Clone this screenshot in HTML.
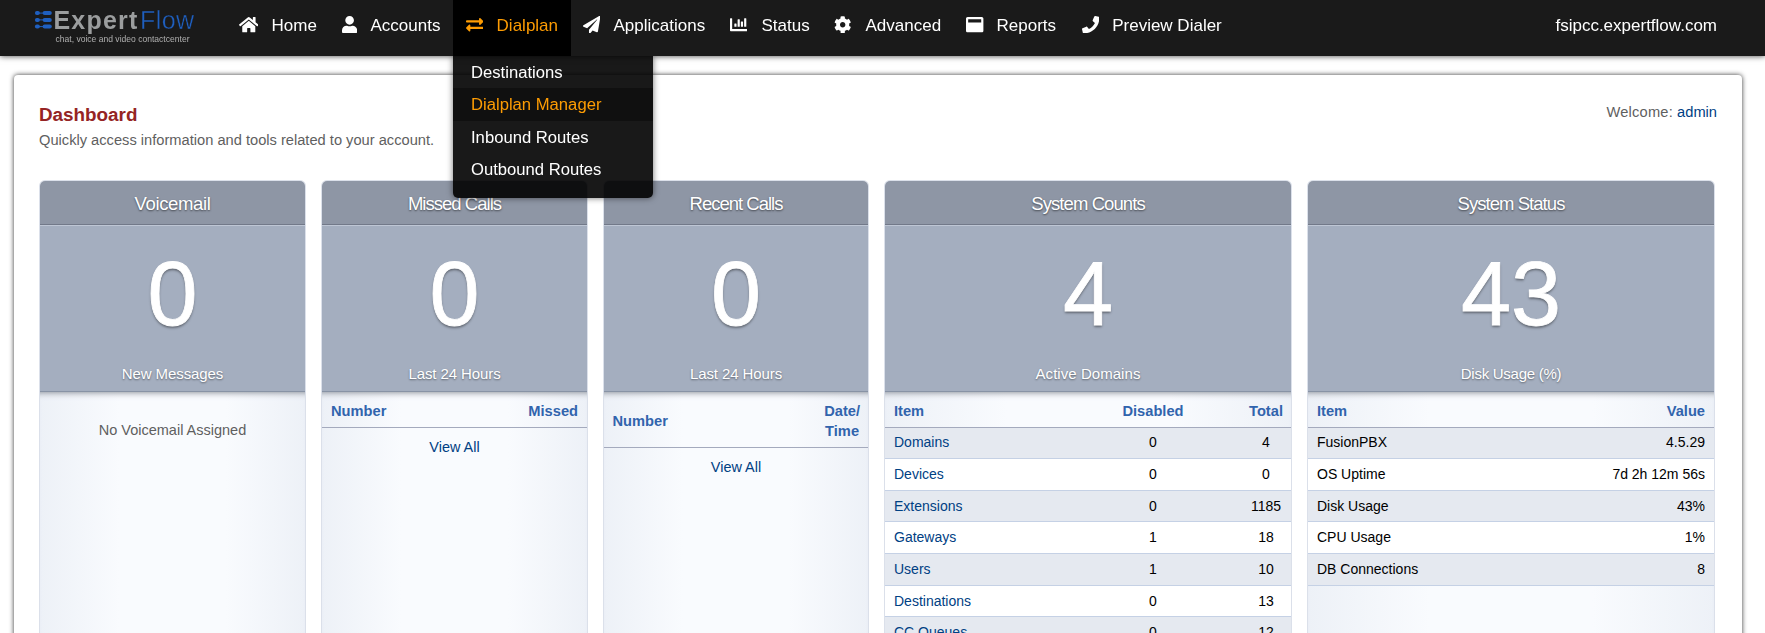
<!DOCTYPE html>
<html>
<head>
<meta charset="utf-8">
<title>Dashboard</title>
<style>
*{box-sizing:border-box;}
html,body{margin:0;padding:0;}
body{width:1765px;height:633px;overflow:hidden;background:#fff;font-family:"Liberation Sans",sans-serif;position:relative;}
#nav{will-change:transform;position:absolute;left:0;top:0;width:1765px;height:56px;background:#1a1a1a;box-shadow:0 0 6px rgba(0,0,0,0.75);z-index:10;}
.ni{position:absolute;top:0;height:56px;color:#fff;font-size:17px;line-height:20px;white-space:nowrap;}
.ni svg{position:absolute;fill:#fff;}
.ni span{position:absolute;top:16px;}
.ni.act{background:#000;color:#fd9c03;}
.ni.act svg{fill:#fd9c03;}
#domain{position:absolute;right:48px;top:16px;color:#fff;font-size:17px;line-height:20px;}
#logo{position:absolute;left:0;top:0;width:230px;height:56px;}
#lg1{position:absolute;left:53.5px;top:5px;font-size:25px;line-height:30px;white-space:nowrap;}
#lg1 b{color:#9b9d9e;letter-spacing:1.2px;}
#lg1 i{font-style:normal;color:#1f5fbf;margin-left:1.5px;letter-spacing:0.45px;-webkit-text-stroke:0.4px #1a1a1a;}
#lg2{position:absolute;left:55.5px;top:33px;font-size:8.55px;line-height:12px;color:#b0b0b0;white-space:nowrap;}
#drop{will-change:transform;position:absolute;left:453px;top:56px;width:200px;height:142px;background:rgba(0,0,0,0.9);border-radius:0 0 5px 5px;z-index:9;box-shadow:0 0 6px rgba(0,0,0,0.55);}
#drop div{height:32.3px;padding-left:18px;font-size:16.65px;line-height:34px;color:#fff;white-space:nowrap;}
#drop div.sel{color:#fd9c03;background:rgba(0,0,0,0.35);}
#main{position:absolute;left:14px;top:75px;width:1728px;height:600px;background:#fff;border-radius:4px 4px 0 0;box-shadow:0 0 5px rgba(0,0,0,0.8);}
#title{position:absolute;left:39px;top:103.5px;font-size:18.85px;line-height:22px;font-weight:bold;color:#952424;}
#sub{position:absolute;left:39px;top:131px;font-size:14.67px;line-height:18px;color:#5f5f5f;}
#welcome{position:absolute;right:48px;top:103px;font-size:14.67px;line-height:18px;color:#5f5f5f;}
#welcome b{font-weight:normal;color:#004083;}
.hud{position:absolute;top:181px;height:470px;border-radius:5px 5px 0 0;overflow:hidden;background:linear-gradient(to right,#edf1f7 0%,#f9fbfe 30%,#f9fbfe 70%,#edf1f7 100%);box-shadow:0 0 0 1px #dbe0ea;}
.ht{position:absolute;left:0;top:0;width:100%;height:44px;background:#8e96a5;border-bottom:1px solid #727989;color:#fff;text-align:center;font-size:18.5px;letter-spacing:-0.43px;line-height:46px;text-shadow:0 1px 2px rgba(0,0,0,0.55);}
.hc{position:absolute;left:0;top:44px;width:100%;height:167px;background:#a4aebf;border-top:1px solid #bec6d4;border-bottom:1px solid #8893a5;color:#fff;text-align:center;}
.big{position:absolute;left:0;width:100%;top:23px;font-size:90px;-webkit-text-stroke:0.8px #fff;line-height:90px;text-shadow:0 2px 2.5px rgba(0,0,0,0.42);}
.lab{position:absolute;left:0;width:100%;top:137.5px;font-size:15px;letter-spacing:-0.1px;line-height:20px;text-shadow:0 1px 2px rgba(0,0,0,0.45);}
.hb{position:absolute;left:0;top:211px;width:100%;height:300px;box-shadow:inset 0 7px 7px -7px #737983;}
.th{position:absolute;left:0;top:0;width:100%;border-bottom:1px solid #a4aabd;color:#3164ad;font-weight:bold;font-size:14.67px;}
.th span,.row span{position:absolute;white-space:nowrap;}
.row{position:absolute;left:0;width:100%;border-bottom:1px solid #c5d1e5;font-size:14px;line-height:30px;color:#000;}
.row.o{background:#e5e9f0;}
.row.e{background:#fff;}
.row a{color:#004083;}
.va{position:absolute;left:0;width:100%;text-align:center;font-size:14.45px;color:#004083;}
</style>
</head>
<body>
<div id="nav">
  <div id="logo">
    <svg style="position:absolute;left:34px;top:10px;" width="20" height="20" viewBox="0 0 20 20">
      <g fill="#1f5fbf" stroke="#1f5fbf" stroke-width="1">
        <line x1="3" y1="3.1" x2="12" y2="3.1"/><line x1="3" y1="9.9" x2="12" y2="9.9"/><line x1="3" y1="16.6" x2="12" y2="16.6"/>
        <rect x="0.9" y="1.1" width="5" height="4" rx="2" stroke="none"/><rect x="8.6" y="1.1" width="9.2" height="4" rx="2" stroke="none"/>
        <rect x="0.9" y="7.9" width="5" height="4" rx="2" stroke="none"/><rect x="8.6" y="7.9" width="9.2" height="4" rx="2" stroke="none"/>
        <rect x="0.9" y="14.6" width="5" height="4" rx="2" stroke="none"/><rect x="8.6" y="14.6" width="9.2" height="4" rx="2" stroke="none"/>
      </g>
    </svg>
    <div id="lg1"><b>Expert</b><i>Flow</i></div>
    <div id="lg2">chat, voice and video contactcenter</div>
  </div>
  <div class="ni" style="left:226px;width:104px;"><svg viewBox="0 0 576 512" style="left:12.61px;top:15.70px;width:19.57px;height:17.4px;"><path d="M280.37 148.26L96 300.11V464a16 16 0 0 0 16 16l112.06-.29a16 16 0 0 0 15.92-16V368a16 16 0 0 1 16-16h64a16 16 0 0 1 16 16v95.64a16 16 0 0 0 16 16.05L464 480a16 16 0 0 0 16-16V300L295.67 148.26a12.19 12.19 0 0 0-15.3 0zM571.6 251.47L488 182.56V44.05a12 12 0 0 0-12-12h-56a12 12 0 0 0-12 12v72.61L318.47 43a48 48 0 0 0-61 0L4.34 251.47a12 12 0 0 0-1.6 16.9l25.5 31A12 12 0 0 0 45.15 301l235.22-193.74a12.19 12.19 0 0 1 15.3 0L530.9 301a12 12 0 0 0 16.9-1.6l25.5-31a12 12 0 0 0-1.7-16.93z"/></svg><span style="left:45.5px;">Home</span></div>
  <div class="ni" style="left:330px;width:123px;"><svg viewBox="0 0 448 512" style="left:11.69px;top:15.70px;width:15.22px;height:17.4px;"><path d="M224 256c70.7 0 128-57.3 128-128S294.7 0 224 0 96 57.3 96 128s57.3 128 128 128zm89.6 32h-16.7c-22.2 10.2-46.9 16-72.9 16s-50.6-5.8-72.9-16h-16.7C60.2 288 0 348.2 0 422.4V464c0 26.5 21.5 48 48 48h352c26.5 0 48-21.5 48-48v-41.6c0-74.2-60.2-134.4-134.4-134.4z"/></svg><span style="left:40.5px;">Accounts</span></div>
  <div class="ni act" style="left:453px;width:118px;"><svg viewBox="0 0 512 512" style="left:12.60px;top:15.70px;width:17.40px;height:17.4px;"><path d="M0 168v-16c0-13.255 10.745-24 24-24h360V80c0-21.367 25.899-32.042 40.971-16.971l80 80c9.372 9.373 9.372 24.569 0 33.941l-80 80C409.956 271.982 384 261.456 384 240v-48H24c-13.255 0-24-10.745-24-24zm488 152H128v-48c0-21.314-25.862-32.08-40.971-16.971l-80 80c-9.372 9.373-9.372 24.569 0 33.941l80 80C102.057 463.997 128 453.437 128 432v-48h360c13.255 0 24-10.745 24-24v-16c0-13.255-10.745-24-24-24z"/></svg><span style="left:43.6px;">Dialplan</span></div>
  <div class="ni" style="left:571px;width:147px;"><svg viewBox="0 0 512 512" style="left:11.60px;top:15.70px;width:17.40px;height:17.4px;"><path d="M476 3.2L12.5 270.6c-18.1 10.4-15.8 35.6 2.2 43.2L121 358.4l287.3-253.2c5.5-4.9 13.3 2.6 8.600 8.300L176 407v80.500c0 23.600 28.500 32.900 42.500 15.800L282 426l124.600 52.200c14.200 6 30.400-2.900 33-18.200l72-432C515 7.800 493.300-6.800 476 3.200z"/></svg><span style="left:42.5px;">Applications</span></div>
  <div class="ni" style="left:718px;width:104px;"><svg viewBox="0 0 512 512" style="left:11.90px;top:15.70px;width:17.40px;height:17.4px;"><path d="M332.8 320h38.4c6.4 0 12.8-6.4 12.8-12.8V172.8c0-6.4-6.4-12.8-12.8-12.8h-38.4c-6.4 0-12.8 6.4-12.8 12.8v134.4c0 6.4 6.4 12.800 12.800 12.800zm96 0h38.400c6.400 0 12.800-6.400 12.800-12.800V76.800c0-6.400-6.400-12.800-12.800-12.800h-38.400c-6.400 0-12.800 6.400-12.800 12.800v230.400c0 6.400 6.400 12.800 12.800 12.800zm-288 0h38.400c6.400 0 12.800-6.400 12.800-12.800v-70.400c0-6.400-6.400-12.800-12.800-12.800h-38.400c-6.400 0-12.800 6.400-12.800 12.800v70.400c0 6.400 6.400 12.800 12.800 12.800zm96 0h38.400c6.400 0 12.800-6.400 12.800-12.800V108.800c0-6.400-6.400-12.800-12.800-12.800h-38.400c-6.400 0-12.800 6.400-12.800 12.800v198.400c0 6.400 6.400 12.800 12.800 12.800zM496 384H64V80c0-8.840-7.160-16-16-16H16C7.160 64 0 71.160 0 80v336c0 17.670 14.330 32 32 32h464c8.840 0 16-7.160 16-16v-32c0-8.840-7.160-16-16-16z"/></svg><span style="left:43.5px;">Status</span></div>
  <div class="ni" style="left:822px;width:132px;"><svg viewBox="0 0 512 512" style="left:12.30px;top:15.70px;width:17.40px;height:17.4px;"><path d="M487.4 315.7l-42.6-24.6c4.3-23.2 4.3-47 0-70.2l42.6-24.6c4.9-2.8 7.1-8.6 5.5-14-11.1-35.6-30-67.800-54.700-94.600-3.800-4.100-10-5.100-14.800-2.300L380.800 110c-17.900-15.400-38.500-27.300-60.800-35.100V25.800c0-5.600-3.900-10.500-9.400-11.700-36.700-8.200-74.300-7.800-109.200 0-5.500 1.200-9.400 6.100-9.400 11.700V75c-22.200 7.900-42.800 19.800-60.800 35.100L88.700 85.500c-4.900-2.800-11-1.900-14.800 2.300-24.700 26.700-43.600 58.900-54.700 94.600-1.700 5.400.6 11.200 5.500 14L67.300 221c-4.300 23.200-4.300 47 0 70.200l-42.600 24.600c-4.900 2.800-7.100 8.600-5.500 14 11.100 35.600 30 67.800 54.700 94.600 3.800 4.100 10 5.100 14.800 2.300l42.600-24.600c17.900 15.400 38.500 27.300 60.800 35.100v49.200c0 5.600 3.900 10.500 9.400 11.700 36.700 8.200 74.300 7.800 109.200 0 5.500-1.200 9.400-6.100 9.400-11.700v-49.200c22.200-7.900 42.800-19.800 60.800-35.100l42.600 24.600c4.900 2.800 11 1.900 14.800-2.300 24.700-26.700 43.600-58.900 54.700-94.600 1.500-5.500-.7-11.300-5.600-14.100zM256 336c-44.100 0-80-35.900-80-80s35.900-80 80-80 80 35.900 80 80-35.900 80-80 80z"/></svg><span style="left:43.5px;">Advanced</span></div>
  <div class="ni" style="left:954px;width:115px;"><svg viewBox="0 0 512 512" style="left:12.30px;top:15.70px;width:17.40px;height:17.4px;"><path d="M464 32H48C21.500 32 0 53.500 0 80v352c0 26.500 21.500 48 48 48h416c26.500 0 48-21.500 48-48V80c0-26.500-21.500-48-48-48zm-16 160H64v-84c0-6.600 5.400-12 12-12h360c6.600 0 12 5.400 12 12v84z"/></svg><span style="left:42.5px;">Reports</span></div>
  <div class="ni" style="left:1069px;width:166px;"><svg viewBox="0 0 512 512" style="left:13.00px;top:15.70px;width:17.40px;height:17.4px;"><path d="M493.4 24.6l-104-24c-11.3-2.6-22.9 3.3-27.500 13.900l-48 112c-4.200 9.800-1.400 21.300 6.900 28l60.600 49.600c-36 76.700-98.900 140.500-177.200 177.200l-49.600-60.600c-6.800-8.300-18.200-11.100-28-6.900l-112 48C3.900 366.500-2 378.100.6 389.400l24 104C27.100 504.200 36.700 512 48 512c256.100 0 464-207.500 464-464 0-11.200-7.700-20.900-18.600-23.400z"/></svg><span style="left:43.2px;">Preview Dialer</span></div>
  <div id="domain">fsipcc.expertflow.com</div>
</div>
<div id="drop">
  <div>Destinations</div>
  <div class="sel">Dialplan Manager</div>
  <div>Inbound Routes</div>
  <div>Outbound Routes</div>
</div>
<div id="main"></div>
<div id="title">Dashboard</div>
<div id="sub">Quickly access information and tools related to your account.</div>
<div id="welcome"><span style="letter-spacing:0.2px;">Welcome:</span> <b>admin</b></div>

<div class="hud" style="left:40px;width:265px;">
  <div class="ht" style="letter-spacing:-0.35px;">Voicemail</div>
  <div class="hc"><div class="big">0</div><div class="lab">New Messages</div></div>
  <div class="hb"><div style="text-align:center;color:#5f5f5f;font-size:14.5px;margin-top:30px;">No Voicemail Assigned</div></div>
</div>
<div class="hud" style="left:322px;width:265px;">
  <div class="ht" style="letter-spacing:-0.97px;">Missed Calls</div>
  <div class="hc"><div class="big">0</div><div class="lab">Last 24 Hours</div></div>
  <div class="hb">
    <div class="th" style="height:36px;line-height:39px;"><span style="left:9px;">Number</span><span style="right:9px;">Missed</span></div>
    <div class="va" style="top:47px;">View All</div>
  </div>
</div>
<div class="hud" style="left:604px;width:264px;">
  <div class="ht" style="letter-spacing:-1.0px;">Recent Calls</div>
  <div class="hc"><div class="big">0</div><div class="lab">Last 24 Hours</div></div>
  <div class="hb">
    <div class="th" style="height:56px;"><span style="left:8.5px;top:19px;line-height:20px;">Number</span><span style="right:8px;top:9px;line-height:20px;text-align:center;">Date/<br>Time</span></div>
    <div class="va" style="top:67px;">View All</div>
  </div>
</div>
<div class="hud" style="left:885px;width:406px;">
  <div class="ht" style="letter-spacing:-0.92px;">System Counts</div>
  <div class="hc"><div class="big">4</div><div class="lab" style="letter-spacing:0.05px;">Active Domains</div></div>
  <div class="hb">
    <div class="th" style="height:36px;line-height:39px;"><span style="left:9px;">Item</span><span style="left:218px;width:100px;text-align:center;">Disabled</span><span style="left:331px;width:100px;text-align:center;">Total</span></div>
    <div class="row o" style="top:36px;height:31px;line-height:28.5px;"><span style="left:9px;"><a>Domains</a></span><span style="left:218px;width:100px;text-align:center;">0</span><span style="left:331px;width:100px;text-align:center;">4</span></div>
    <div class="row e" style="top:67px;height:32px;"><span style="left:9px;"><a>Devices</a></span><span style="left:218px;width:100px;text-align:center;">0</span><span style="left:331px;width:100px;text-align:center;">0</span></div>
    <div class="row o" style="top:99px;height:31px;"><span style="left:9px;"><a>Extensions</a></span><span style="left:218px;width:100px;text-align:center;">0</span><span style="left:331px;width:100px;text-align:center;">1185</span></div>
    <div class="row e" style="top:130px;height:32px;"><span style="left:9px;"><a>Gateways</a></span><span style="left:218px;width:100px;text-align:center;">1</span><span style="left:331px;width:100px;text-align:center;">18</span></div>
    <div class="row o" style="top:162px;height:32px;"><span style="left:9px;"><a>Users</a></span><span style="left:218px;width:100px;text-align:center;">1</span><span style="left:331px;width:100px;text-align:center;">10</span></div>
    <div class="row e" style="top:194px;height:31px;"><span style="left:9px;"><a>Destinations</a></span><span style="left:218px;width:100px;text-align:center;">0</span><span style="left:331px;width:100px;text-align:center;">13</span></div>
    <div class="row o" style="top:225px;height:32px;"><span style="left:9px;"><a>CC Queues</a></span><span style="left:218px;width:100px;text-align:center;">0</span><span style="left:331px;width:100px;text-align:center;">12</span></div>
  </div>
</div>
<div class="hud" style="left:1308px;width:406px;">
  <div class="ht" style="letter-spacing:-0.95px;">System Status</div>
  <div class="hc"><div class="big">43</div><div class="lab" style="letter-spacing:-0.27px;">Disk Usage (%)</div></div>
  <div class="hb">
    <div class="th" style="height:36px;line-height:39px;"><span style="left:9px;">Item</span><span style="right:9px;">Value</span></div>
    <div class="row o" style="top:36px;height:31px;line-height:28.5px;"><span style="left:9px;">FusionPBX</span><span style="right:9px;">4.5.29</span></div>
    <div class="row e" style="top:67px;height:32px;"><span style="left:9px;">OS Uptime</span><span style="right:9px;">7d 2h 12m 56s</span></div>
    <div class="row o" style="top:99px;height:31px;"><span style="left:9px;">Disk Usage</span><span style="right:9px;">43%</span></div>
    <div class="row e" style="top:130px;height:32px;"><span style="left:9px;">CPU Usage</span><span style="right:9px;">1%</span></div>
    <div class="row o" style="top:162px;height:32px;"><span style="left:9px;">DB Connections</span><span style="right:9px;">8</span></div>
  </div>
</div>
</body>
</html>
